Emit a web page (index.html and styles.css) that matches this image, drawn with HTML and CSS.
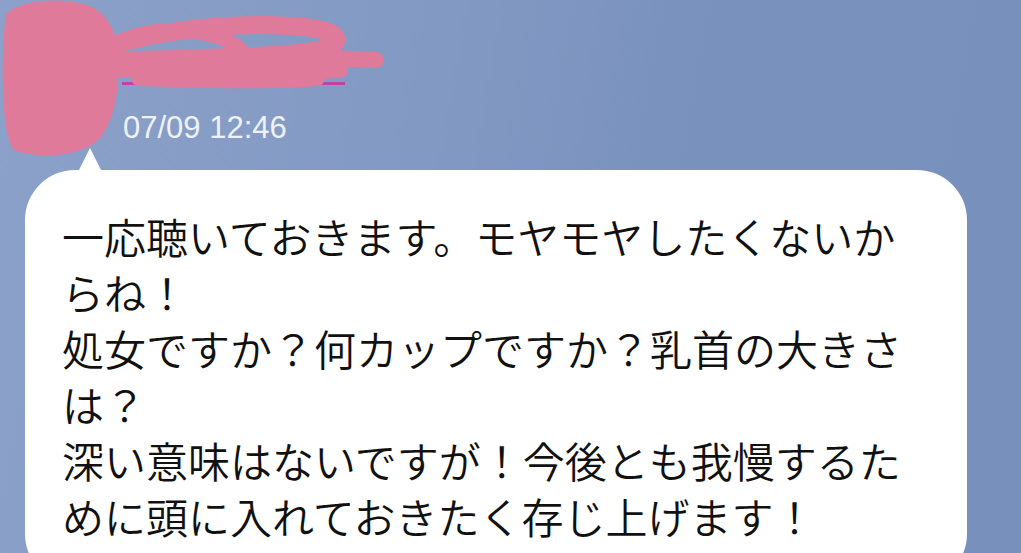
FILE: index.html
```html
<!DOCTYPE html>
<html lang="ja">
<head>
    <meta charset="UTF-8">
    <meta name="viewport" content="width=device-width, initial-scale=1.0">
    <title>トーク</title>
    <link rel="stylesheet" href="styles.css">
</head>
<body>
    <div class="chat">
        <!-- sender (hidden under the scribble) -->
        <div class="sender">
            <div class="avatar"></div>
            <div class="name-line"></div>
        </div>
        <div class="time">07/09 12:46</div>

        <!-- message bubble -->
        <div class="bubble">
            <p class="text">一応聴いておきます。モヤモヤしたくないからね！<br>処女ですか？何カップですか？乳首の大きさは？<br>深い意味はないですが！今後とも我慢するために頭に入れておきたく存じ上げます！</p>
        </div>

        <svg class="scribble" width="400" height="170" viewBox="0 0 400 170">
            <path d="M6,14 C20,0 60,-4 90,6 C112,16 120,40 118,70 C118,100 112,125 98,140 C80,156 40,160 14,150 C2,140 0,60 6,14 Z" fill="#e07a9b"/>
            <g fill="none" stroke="#e07a9b" stroke-linecap="round" stroke-linejoin="round">
                <path stroke-width="18" d="M70,60 C140,30 230,22 290,26 C330,28 342,36 334,44 C320,54 270,56 200,58 C160,60 130,60 110,60"/>
                <path stroke-width="16" d="M110,62 C200,56 300,56 376,60"/>
                <path stroke-width="16" d="M112,70 C200,68 280,74 340,70"/>
                <path stroke-width="14" d="M112,46 C150,22 210,28 240,48"/>
                <path stroke-width="12" d="M138,80 C200,82 260,84 318,80"/>
            </g>
        </svg>
    </div>
</body>
</html>
```

FILE: styles.css
```css
/* Global styles */
body {
    margin: 0;
    padding: 0;
    height: 553px;
    overflow: hidden;
    font-family: "Noto Sans CJK JP", "Noto Sans", sans-serif;
    background: linear-gradient(100deg, #8ba1c9 0%, #8299c3 40%, #7891bd 65%, #7790bc 100%);
}

.chat {
    position: relative;
    padding: 0 54px 0 25px;
}

/* Sender row */
.sender {
    height: 108px;
    display: flex;
    align-items: flex-end;
    gap: 17px;
}

.avatar {
    width: 80px;
    height: 40px;
    background-color: #ffffff;
    border-bottom: 6px solid #1c1c28;
    box-sizing: border-box;
}

.name-line {
    width: 223px;
    height: 3px;
    margin-bottom: 23px;
    background-color: #c243a8;
}

.time {
    padding-left: 98px;
    font-family: "Liberation Sans", Arial, sans-serif;
    font-size: 31px;
    line-height: 40px;
    height: 40px;
    color: #eef2f9;
}

/* Message bubble */
.bubble {
    position: relative;
    margin-top: 22px;
    width: 942px;
    box-sizing: border-box;
    padding: 38px 37px 40px;
    background-color: #ffffff;
    border-radius: 50px;
}

.bubble::before {
    content: "";
    position: absolute;
    top: -22px;
    left: 53px;
    border-left: 12px solid transparent;
    border-right: 12px solid transparent;
    border-bottom: 24px solid #ffffff;
}

.text {
    margin: 0;
    font-size: 42px;
    font-weight: 350;
    line-height: 56px;
    color: #111111;
}

.scribble {
    position: absolute;
    top: 0;
    left: 0;
}
```
